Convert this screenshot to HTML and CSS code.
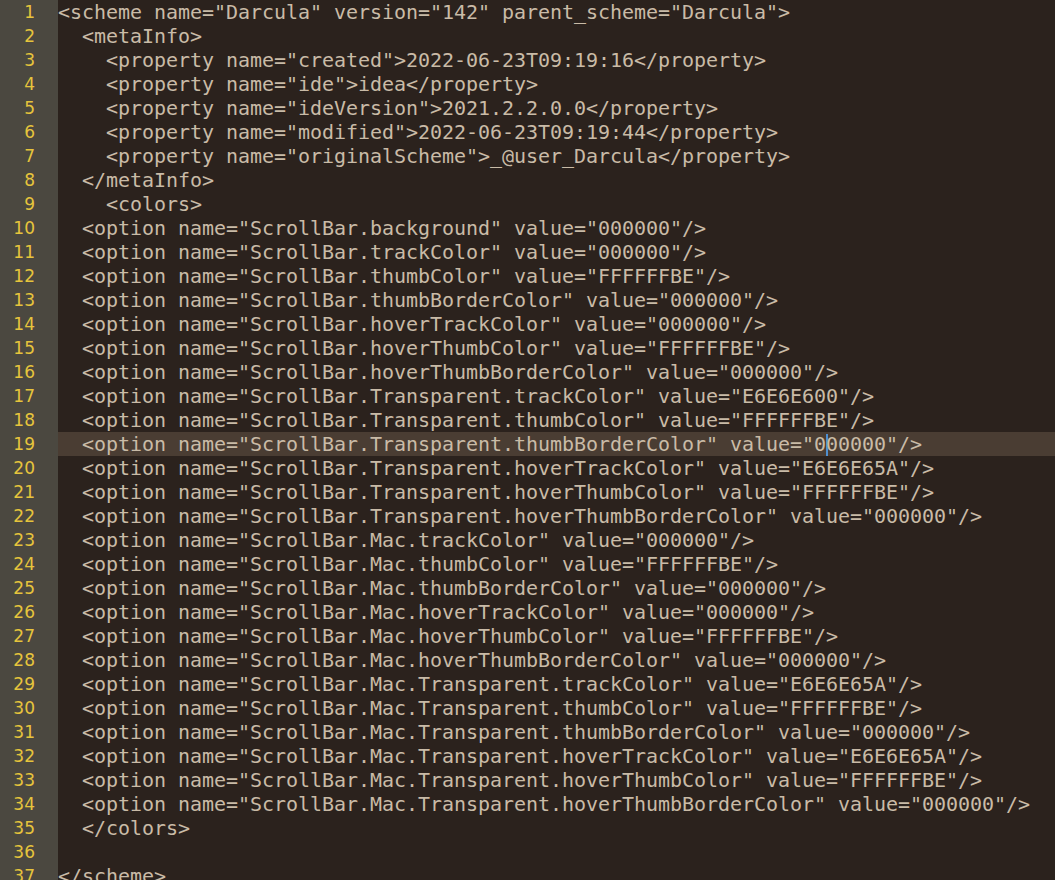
FILE: index.html
```html
<!DOCTYPE html>
<html>
<head>
<meta charset="utf-8">
<link rel="stylesheet" href="styles.css">
</head>
<body>
<div class="editor">
  <div class="gutter">
    <div class="ln">1</div><div class="ln">2</div><div class="ln">3</div><div class="ln">4</div><div class="ln">5</div><div class="ln">6</div><div class="ln">7</div><div class="ln">8</div><div class="ln">9</div><div class="ln">10</div><div class="ln">11</div><div class="ln">12</div><div class="ln">13</div><div class="ln">14</div><div class="ln">15</div><div class="ln">16</div><div class="ln">17</div><div class="ln">18</div><div class="ln">19</div><div class="ln">20</div><div class="ln">21</div><div class="ln">22</div><div class="ln">23</div><div class="ln">24</div><div class="ln">25</div><div class="ln">26</div><div class="ln">27</div><div class="ln">28</div><div class="ln">29</div><div class="ln">30</div><div class="ln">31</div><div class="ln">32</div><div class="ln">33</div><div class="ln">34</div><div class="ln">35</div><div class="ln">36</div><div class="ln">37</div>
  </div>
  <div class="code">
<div class="line">&lt;scheme name="Darcula" version="142" parent_scheme="Darcula"&gt;</div>
<div class="line">  &lt;metaInfo&gt;</div>
<div class="line">    &lt;property name="created"&gt;2022-06-23T09:19:16&lt;/property&gt;</div>
<div class="line">    &lt;property name="ide"&gt;idea&lt;/property&gt;</div>
<div class="line">    &lt;property name="ideVersion"&gt;2021.2.2.0.0&lt;/property&gt;</div>
<div class="line">    &lt;property name="modified"&gt;2022-06-23T09:19:44&lt;/property&gt;</div>
<div class="line">    &lt;property name="originalScheme"&gt;_@user_Darcula&lt;/property&gt;</div>
<div class="line">  &lt;/metaInfo&gt;</div>
<div class="line">    &lt;colors&gt;</div>
<div class="line">  &lt;option name="ScrollBar.background" value="000000"/&gt;</div>
<div class="line">  &lt;option name="ScrollBar.trackColor" value="000000"/&gt;</div>
<div class="line">  &lt;option name="ScrollBar.thumbColor" value="FFFFFFBE"/&gt;</div>
<div class="line">  &lt;option name="ScrollBar.thumbBorderColor" value="000000"/&gt;</div>
<div class="line">  &lt;option name="ScrollBar.hoverTrackColor" value="000000"/&gt;</div>
<div class="line">  &lt;option name="ScrollBar.hoverThumbColor" value="FFFFFFBE"/&gt;</div>
<div class="line">  &lt;option name="ScrollBar.hoverThumbBorderColor" value="000000"/&gt;</div>
<div class="line">  &lt;option name="ScrollBar.Transparent.trackColor" value="E6E6E600"/&gt;</div>
<div class="line">  &lt;option name="ScrollBar.Transparent.thumbColor" value="FFFFFFBE"/&gt;</div>
<div class="line current">  &lt;option name="ScrollBar.Transparent.thumbBorderColor" value="0<span class="caret"></span>00000"/&gt;</div>
<div class="line">  &lt;option name="ScrollBar.Transparent.hoverTrackColor" value="E6E6E65A"/&gt;</div>
<div class="line">  &lt;option name="ScrollBar.Transparent.hoverThumbColor" value="FFFFFFBE"/&gt;</div>
<div class="line">  &lt;option name="ScrollBar.Transparent.hoverThumbBorderColor" value="000000"/&gt;</div>
<div class="line">  &lt;option name="ScrollBar.Mac.trackColor" value="000000"/&gt;</div>
<div class="line">  &lt;option name="ScrollBar.Mac.thumbColor" value="FFFFFFBE"/&gt;</div>
<div class="line">  &lt;option name="ScrollBar.Mac.thumbBorderColor" value="000000"/&gt;</div>
<div class="line">  &lt;option name="ScrollBar.Mac.hoverTrackColor" value="000000"/&gt;</div>
<div class="line">  &lt;option name="ScrollBar.Mac.hoverThumbColor" value="FFFFFFBE"/&gt;</div>
<div class="line">  &lt;option name="ScrollBar.Mac.hoverThumbBorderColor" value="000000"/&gt;</div>
<div class="line">  &lt;option name="ScrollBar.Mac.Transparent.trackColor" value="E6E6E65A"/&gt;</div>
<div class="line">  &lt;option name="ScrollBar.Mac.Transparent.thumbColor" value="FFFFFFBE"/&gt;</div>
<div class="line">  &lt;option name="ScrollBar.Mac.Transparent.thumbBorderColor" value="000000"/&gt;</div>
<div class="line">  &lt;option name="ScrollBar.Mac.Transparent.hoverTrackColor" value="E6E6E65A"/&gt;</div>
<div class="line">  &lt;option name="ScrollBar.Mac.Transparent.hoverThumbColor" value="FFFFFFBE"/&gt;</div>
<div class="line">  &lt;option name="ScrollBar.Mac.Transparent.hoverThumbBorderColor" value="000000"/&gt;</div>
<div class="line">  &lt;/colors&gt;</div>
<div class="line"> </div>
<div class="line">&lt;/scheme&gt;</div>
  </div>
</div>
</body>
</html>
```

FILE: styles.css
```css
html, body {
  margin: 0;
  padding: 0;
  background: #2b221d;
  overflow: hidden;
}

.editor {
  display: flex;
  width: 1055px;
  height: 880px;
  overflow: hidden;
  font-family: "DejaVu Sans Mono", monospace;
  font-size: 20px;
  line-height: 24px;
}

.gutter {
  flex: 0 0 58px;
  background: #4b4840;
  color: #e6c43c;
  box-sizing: border-box;
  padding-right: 23px;
  text-align: right;
}

.ln {
  height: 24px;
  font-family: "DejaVu Sans", sans-serif;
  font-size: 17px;
}

.code {
  flex: 1;
  color: #c9bba7;
  letter-spacing: -0.04px;
}

.line {
  height: 24px;
  white-space: pre;
}

.line.current {
  background: #4a3d33;
}

.caret {
  display: inline-block;
  width: 2px;
  height: 22px;
  margin-right: -2px;
  vertical-align: -5px;
  background: #4f8fd0;
}
```
